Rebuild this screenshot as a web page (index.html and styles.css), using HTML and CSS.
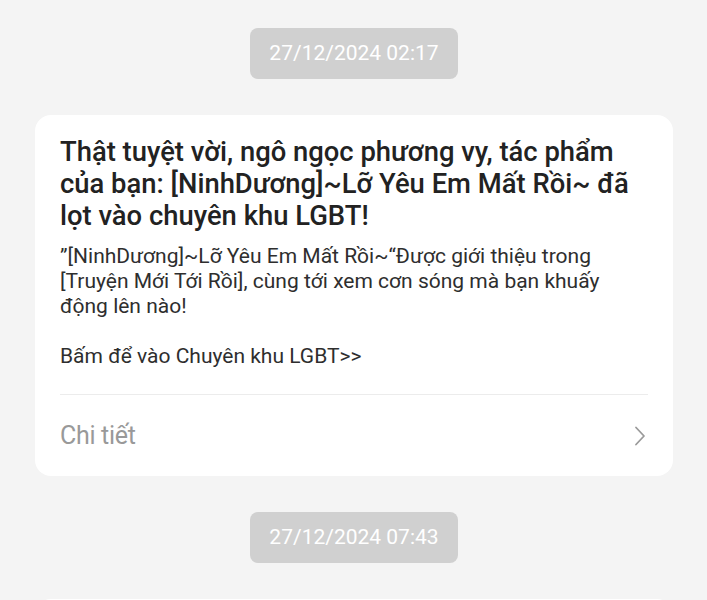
FILE: index.html
```html
<!DOCTYPE html>
<html lang="vi">
<head>
<meta charset="utf-8">
<link rel="stylesheet" href="styles.css">
</head>
<body>
<div class="feed">
  <div class="stamp">27/12/2024 02:17</div>
  <div class="card">
    <h2 class="title">Thật tuyệt vời, ngô ngọc phương vy, tác phẩm của bạn: [NinhDương]~Lỡ Yêu Em Mất Rồi~ đã lọt vào chuyên khu LGBT!</h2>
    <p class="body">”[NinhDương]~Lỡ Yêu Em Mất Rồi~“Được giới thiệu trong [Truyện Mới Tới Rồi], cùng tới xem cơn sóng mà bạn khuấy động lên nào!</p>
    <p class="body gap">Bấm để vào Chuyên khu LGBT&gt;&gt;</p>
    <div class="divider"></div>
    <div class="detail">
      <span>Chi tiết</span>
      <svg class="chev" width="12" height="20" viewBox="0 0 12 20"><path d="M2 1.5 L10 10 L2 18.5" fill="none" stroke="#9a9a9a" stroke-width="1.8" stroke-linecap="round" stroke-linejoin="round"/></svg>
    </div>
  </div>
  <div class="stamp">27/12/2024 07:43</div>
  <div class="card"></div>
</div>
</body>
</html>
```
FILE: styles.css
```css
html, body {
  margin: 0;
  background: #f4f4f4;
  font-family: Roboto, "Noto Sans", sans-serif;
}
.feed {
  display: flex;
  flex-direction: column;
  padding: 28px 34px 0 35px;
  height: 600px;
  box-sizing: border-box;
  overflow: hidden;
}
.stamp {
  align-self: center;
  background: #d0d0d0;
  color: #fff;
  font-size: 21px;
  height: 51px;
  line-height: 51px;
  padding: 0 19px;
  border-radius: 8px;
}
.card {
  background: #fff;
  border-radius: 16px;
  margin: 36px 0;
  padding: 21px 25px 0 25px;
  flex-shrink: 0;
  min-height: 100px;
}
.title {
  margin: 0;
  font-size: 27.4px;
  font-weight: 500;
  line-height: 32px;
  color: #222;
}
.body {
  margin: 12px 0 0;
  font-size: 21px;
  line-height: 25px;
  color: #2e2e2e;
}
.body.gap {
  margin-top: 25px;
}
.divider {
  height: 1px;
  background: #ececec;
  margin-top: 25px;
}
.detail {
  display: flex;
  justify-content: space-between;
  align-items: center;
  height: 81px;
  color: #999;
  font-size: 25px;
  letter-spacing: -0.3px;
}
.chev {
  margin-right: 2px;
}
```
